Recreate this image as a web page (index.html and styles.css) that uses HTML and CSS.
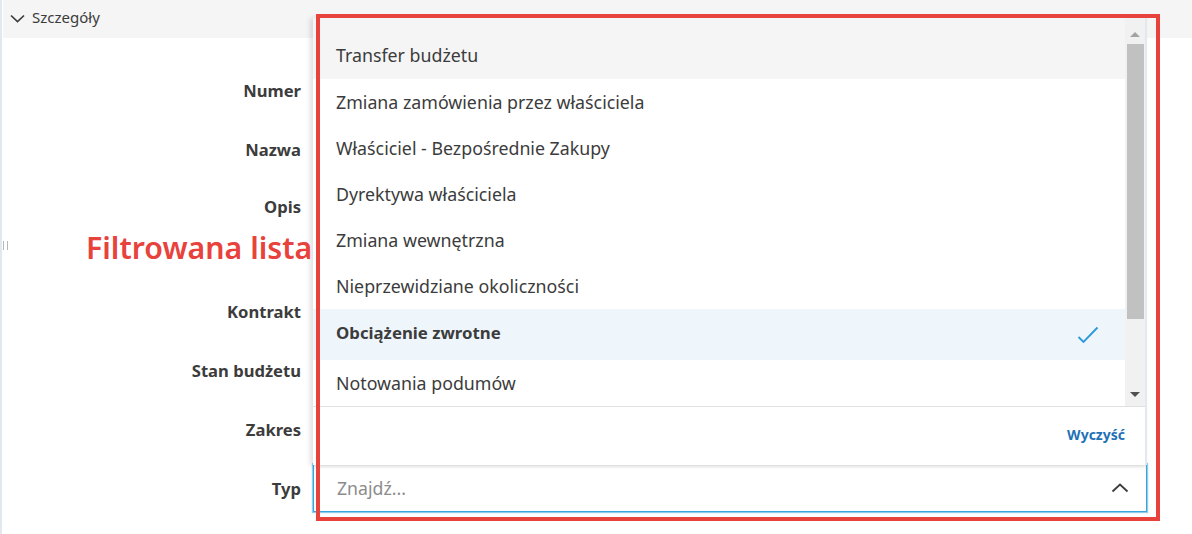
FILE: index.html
```html
<!DOCTYPE html>
<html lang="pl">
<head>
<meta charset="utf-8">
<title>Szczegóły</title>
<link rel="stylesheet" href="styles.css">
</head>
<body>
<div class="app">
  <div class="rail"><span class="handle"></span></div>
  <main class="main">
    <div class="section-head">
      <svg class="chev-down" width="15" height="9" viewBox="0 0 15 9"><path d="M1 1.5 L7.5 7.5 L14 1.5" fill="none" stroke="#3c3c3c" stroke-width="1.7"/></svg>
      <span>Szczegóły</span>
    </div>
    <div class="form">
      <div class="label">Numer</div><div class="field"></div>
      <div class="label">Nazwa</div><div class="field"></div>
      <div class="label top">Opis</div><div class="field tall"></div>
      <div class="label">Kontrakt</div><div class="field"></div>
      <div class="label">Stan budżetu</div><div class="field"></div>
      <div class="label">Zakres</div><div class="field"><span class="peek"></span></div>
      <div class="label">Typ</div>
      <div class="field">
        <div class="combo">
          <span class="placeholder">Znajdź...</span>
          <svg class="chev-up" width="18" height="10" viewBox="0 0 18 10"><path d="M1.5 8.5 L9 1.5 L16.5 8.5" fill="none" stroke="#3c3c3c" stroke-width="1.8"/></svg>
        </div>
      </div>
    </div>
  </main>

  <div class="dropdown">
    <div class="list-wrap">
      <ul class="list">
        <li class="opt first hover">Transfer budżetu</li>
        <li class="opt">Zmiana zamówienia przez właściciela</li>
        <li class="opt">Właściciel - Bezpośrednie Zakupy</li>
        <li class="opt">Dyrektywa właściciela</li>
        <li class="opt">Zmiana wewnętrzna</li>
        <li class="opt">Nieprzewidziane okoliczności</li>
        <li class="opt selected">Obciążenie zwrotne
          <svg class="check" width="22" height="18" viewBox="0 0 22 18"><path d="M1.5 11 L6.5 16 L20.5 1.5" fill="none" stroke="#2a9ad9" stroke-width="1.9"/></svg>
        </li>
        <li class="opt">Notowania podumów</li>
      </ul>
      <div class="scrollbar">
        <span class="arrow up"></span>
        <span class="thumb"></span>
        <span class="arrow down"></span>
      </div>
    </div>
    <div class="footer"><a class="clear">Wyczyść</a></div>
  </div>

  <div class="annot-box"></div>
  <div class="annot-text">Filtrowana lista</div>
</div>
</body>
</html>
```

FILE: styles.css
```css
html, body {
  margin: 0;
  padding: 0;
  background: #ffffff;
}
body {
  width: 1192px;
  height: 534px;
  overflow: hidden;
  font-family: "Noto Sans", "Open Sans", sans-serif;
  color: #3c3c3c;
}
.app {
  position: relative;
  display: flex;
  width: 1192px;
  height: 534px;
}
.rail {
  width: 3px;
  flex: none;
  border-left: 2px solid #e3e8ef;
  box-sizing: border-box;
}
.handle {
  position: absolute;
  left: 3px;
  top: 241px;
  width: 5px;
  height: 9px;
  border-left: 1px solid #b8b8b8;
  border-right: 1px solid #b8b8b8;
  box-sizing: border-box;
}
.main {
  flex: 1;
  display: flex;
  flex-direction: column;
}
.section-head {
  height: 38px;
  background: #f5f5f5;
  display: flex;
  align-items: center;
  gap: 7px;
  padding-left: 7px;
  font-size: 15px;
  color: #3c3c3c;
}
.section-head span {
  position: relative;
  top: -2px;
}
.chev-down {
  position: relative;
  top: -1px;
}
.form {
  display: grid;
  grid-template-columns: 298px 834px;
  grid-template-rows: 48px 48px 92px 48px 48px 48px 48px;
  column-gap: 12px;
  row-gap: 11px;
  padding-top: 28px;
}
.label {
  font-size: 16.6px;
  font-weight: 700;
  text-align: right;
  display: flex;
  align-items: center;
  justify-content: flex-end;
  color: #3c3c3c;
}
.label.top {
  align-items: flex-start;
  padding-top: 11px;
  box-sizing: border-box;
}
.field {
  position: relative;
}
.peek {
  position: absolute;
  left: 832px;
  top: 16px;
  width: 2px;
  height: 12px;
  background: #6a6a6a;
}
.combo {
  height: 48px;
  box-sizing: border-box;
  border: 1px solid #3aa4dc;
  box-shadow: 0 0 1px 1px rgba(58, 164, 220, 0.55), inset 0 3px 4px -2px rgba(0, 0, 0, 0.12);
  background: #fff;
  display: flex;
  align-items: center;
  justify-content: space-between;
  padding: 0 17px 0 23px;
}
.placeholder {
  font-size: 17.7px;
  color: #8c8c8c;
}
.dropdown {
  position: absolute;
  left: 313px;
  top: 18px;
  width: 834px;
  height: 447px;
  background: #fff;
  box-sizing: border-box;
  border-right: 2px solid #e3e8ef;
  box-shadow: -3px 0 5px rgba(0, 0, 0, 0.12);
  display: flex;
  flex-direction: column;
}
.list-wrap {
  height: 388px;
  display: flex;
  border-bottom: 1px solid #e0e0e0;
}
.list {
  flex: 1;
  list-style: none;
  margin: 0;
  padding: 0;
}
.opt {
  height: 46px;
  display: flex;
  align-items: center;
  padding-left: 23px;
  padding-right: 24px;
  font-size: 17.8px;
  color: #3c3c3c;
  box-sizing: border-box;
}
.opt.first {
  height: 61px;
  padding-top: 13px;
}
.opt.hover {
  background: #f5f5f5;
}
.opt.selected {
  height: 51px;
  background: #eef6fc;
  font-weight: 700;
  font-size: 16.8px;
  justify-content: space-between;
  padding-bottom: 5px;
}
.check {
  margin-right: 2px;
  margin-top: 5px;
}
.scrollbar {
  width: 20px;
  background: #f1f1f1;
  display: flex;
  flex-direction: column;
  align-items: center;
}
.arrow {
  width: 0;
  height: 0;
  border-left: 5px solid transparent;
  border-right: 5px solid transparent;
}
.arrow.up {
  border-bottom: 5px solid #a3a3a3;
  margin-top: 14px;
}
.arrow.down {
  border-top: 5px solid #505050;
  margin-top: 73px;
}
.thumb {
  width: 17px;
  height: 275px;
  background: #c1c1c1;
  margin-top: 7px;
}
.footer {
  flex: 1;
  display: flex;
  align-items: center;
  justify-content: flex-end;
  padding-right: 20px;
}
.clear {
  font-size: 14px;
  font-weight: 700;
  color: #1f72b6;
  position: relative;
  top: -2px;
}
.annot-box {
  position: absolute;
  left: 316px;
  top: 14px;
  width: 844px;
  height: 507px;
  box-sizing: border-box;
  border: 4.5px solid #e8423d;
  pointer-events: none;
}
.annot-text {
  position: absolute;
  left: 86px;
  top: 227px;
  font-size: 30.3px;
  font-weight: 600;
  color: #e8423d;
  white-space: nowrap;
}
```
